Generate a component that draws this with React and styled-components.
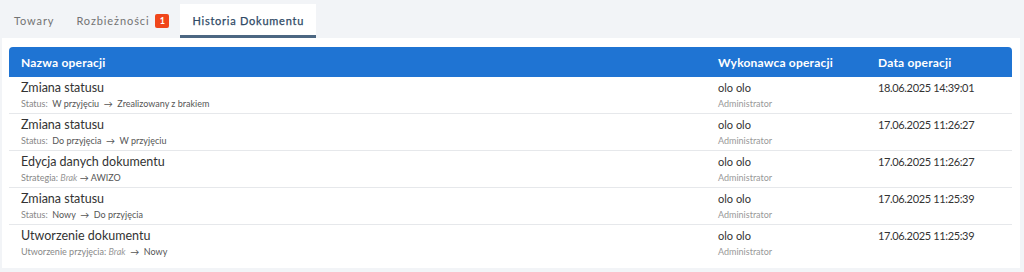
import React from "react";
import styled, { createGlobalStyle } from "styled-components";

const Global = createGlobalStyle`
  html, body { margin: 0; padding: 0; background: #f2f4f7; }
  body { font-family: Lato, "Liberation Sans", sans-serif; }
`;

const Page = styled.div`
  width: 1024px;
  height: 272px;
  background: #f2f4f7;
  box-sizing: border-box;
  padding: 4px 4px 0 2px;
`;

const Tabs = styled.div`
  display: flex;
  align-items: stretch;
  height: 34px;
  padding-left: 1px;
`;

const Tab = styled.div`
  display: flex;
  align-items: center;
  gap: 6px;
  padding: 0 ${(p) => (p.$active ? "12px" : "11px")};
  font-size: 11px;
  letter-spacing: ${(p) => (p.$active ? "0.75px" : "0.9px")};
  color: ${(p) => (p.$active ? "#2f4a66" : "#737373")};
  font-weight: 400;
  -webkit-text-stroke: ${(p) => (p.$active ? "0.25px #2f4a66" : "0")};
  background: ${(p) => (p.$active ? "#ffffff" : "transparent")};
  border-bottom: 3px solid ${(p) => (p.$active ? "#4c6782" : "transparent")};
  padding-top: 2px;
  box-sizing: border-box;
`;

const Badge = styled.span`
  display: inline-flex;
  align-items: center;
  justify-content: center;
  width: 14px;
  height: 14px;
  background: #f0461b;
  color: #fff;
  font-size: 9px;
  font-weight: 700;
  border-radius: 2px;
  letter-spacing: 0;
`;

const Card = styled.div`
  background: #fff;
  height: 230px;
  box-sizing: border-box;
  padding: 9px 7px 0 7px;
  width: 1018px;
`;

const Table = styled.div`
  display: grid;
  grid-template-columns: 697px 160px 1fr;
  width: 1003px;
`;

const HeadCell = styled.div`
  background: #1f74d3;
  color: #fff;
  font-weight: 700;
  font-size: 12px;
  height: 30px;
  display: flex;
  align-items: center;
  padding-left: 12px;
  border-top-left-radius: ${(p) => (p.$first ? "4px" : "0")};
  border-top-right-radius: ${(p) => (p.$last ? "4px" : "0")};
  letter-spacing: 0.2px;
`;

const Cell = styled.div`
  height: 37px;
  box-sizing: border-box;
  padding: 2px 0 0 12px;
  border-bottom: 1px solid ${(p) => (p.$lastRow ? "transparent" : "#e6e8eb")};
  display: flex;
  flex-direction: column;
`;

const Title = styled.div`
  font-size: 12.5px;
  color: #333;
  line-height: 18px;
`;

const Sub = styled.div`
  font-size: 9px;
  color: #555;
  line-height: 14px;
  span.lbl { color: #888; }
  i { color: #999; }
`;

const Name = styled.div`
  font-size: 11px;
  color: #333;
  line-height: 17px;
`;

const Role = styled.div`
  font-size: 9px;
  color: #999;
  line-height: 15px;
`;

const DateText = styled.div`
  font-size: 11px;
  letter-spacing: -0.35px;
  color: #333;
  line-height: 17px;
`;

const rows = [
  { title: "Zmiana statusu", sub: <><span className="lbl">Status:</span>&nbsp; W przyjęciu &nbsp;→&nbsp; Zrealizowany z brakiem</>, date: "18.06.2025 14:39:01" },
  { title: "Zmiana statusu", sub: <><span className="lbl">Status:</span>&nbsp; Do przyjęcia &nbsp;→&nbsp; W przyjęciu</>, date: "17.06.2025 11:26:27" },
  { title: "Edycja danych dokumentu", sub: <><span className="lbl">Strategia:</span> <i>Brak</i> → AWIZO</>, date: "17.06.2025 11:26:27" },
  { title: "Zmiana statusu", sub: <><span className="lbl">Status:</span>&nbsp; Nowy &nbsp;→&nbsp; Do przyjęcia</>, date: "17.06.2025 11:25:39" },
  { title: "Utworzenie dokumentu", sub: <><span className="lbl">Utworzenie przyjęcia:</span> <i>Brak</i> &nbsp;→&nbsp; Nowy</>, date: "17.06.2025 11:25:39" },
];

export default function App() {
  return (
    <Page>
      <Global />
      <Tabs>
        <Tab>Towary</Tab>
        <Tab>Rozbieżności <Badge>1</Badge></Tab>
        <Tab $active>Historia Dokumentu</Tab>
      </Tabs>
      <Card>
        <Table>
          <HeadCell $first>Nazwa operacji</HeadCell>
          <HeadCell>Wykonawca operacji</HeadCell>
          <HeadCell $last>Data operacji</HeadCell>
          {rows.map((r, i) => {
            const last = i === rows.length - 1;
            return (
              <React.Fragment key={i}>
                <Cell $lastRow={last}>
                  <Title>{r.title}</Title>
                  <Sub>{r.sub}</Sub>
                </Cell>
                <Cell $lastRow={last}>
                  <Name>olo olo</Name>
                  <Role>Administrator</Role>
                </Cell>
                <Cell $lastRow={last}>
                  <DateText>{r.date}</DateText>
                </Cell>
              </React.Fragment>
            );
          })}
        </Table>
      </Card>
    </Page>
  );
}
